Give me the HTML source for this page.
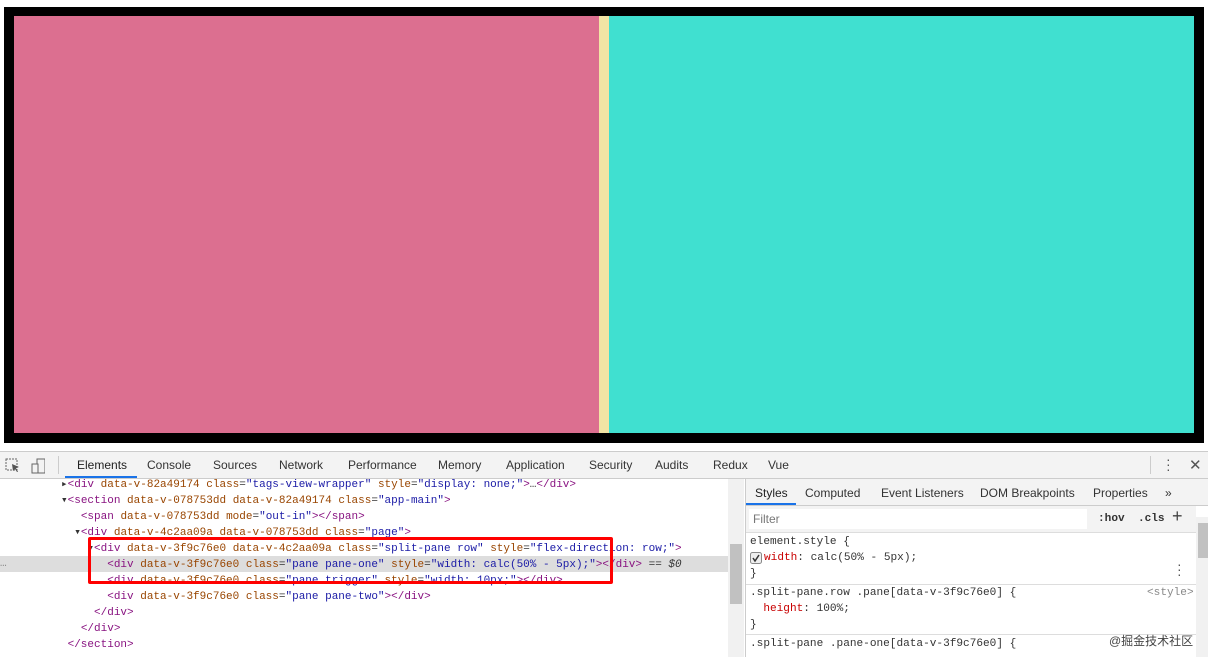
<!DOCTYPE html>
<html><head><meta charset="utf-8"><style>
*{margin:0;padding:0;box-sizing:border-box}
body{width:1208px;height:657px;overflow:hidden;background:#fff;position:relative;font-family:"Liberation Sans",sans-serif}
.a{position:absolute;white-space:pre}
.m{font-family:"Liberation Mono",monospace;font-size:11.1px;line-height:16px}
.c{font-family:"Liberation Mono",monospace;font-size:11px;line-height:16px}
.t{font-size:12px;color:#333;top:458px}
.tg{color:#881280}.at{color:#994500}.v{color:#1a1aa6}.k{color:#c80000}
.s{font-size:12px;color:#333;top:486px}
</style></head><body>
<div class="a" style="left:4px;top:7px;width:1200px;height:436px;background:#000"></div>
<div class="a" style="left:14px;top:16px;width:585px;height:417px;background:#dc6f90"></div>
<div class="a" style="left:599px;top:16px;width:10px;height:417px;background:#f2e4a4"></div>
<div class="a" style="left:609px;top:16px;width:585px;height:417px;background:#40e0d0"></div>
<div class="a" style="left:0;top:451px;width:1208px;height:28px;background:#f3f3f3;border-top:1px solid #ccc;border-bottom:1px solid #ccc"></div>
<svg class="a" style="left:5px;top:457px" width="40" height="18"><rect x="1" y="2" width="11" height="11" fill="none" stroke="#666" stroke-dasharray="2 1"/><path d="M7 7 L14 10 L11 11 L13 15 L12 15 L10 12 L8 14Z" fill="#555"/><rect x="32" y="2" width="8" height="14" fill="none" stroke="#666"/><rect x="27" y="7" width="6" height="9" fill="#f3f3f3" stroke="#666"/></svg>
<div class="a" style="left:58px;top:456px;width:1px;height:18px;background:#ccc"></div>
<div class="a t" style="left:77px;color:#222">Elements</div>
<div class="a" style="left:65px;top:476px;width:72px;height:2px;background:#1a73e8"></div>
<div class="a t" style="left:147px">Console</div>
<div class="a t" style="left:213px">Sources</div>
<div class="a t" style="left:279px">Network</div>
<div class="a t" style="left:348px">Performance</div>
<div class="a t" style="left:438px">Memory</div>
<div class="a t" style="left:506px">Application</div>
<div class="a t" style="left:589px">Security</div>
<div class="a t" style="left:655px">Audits</div>
<div class="a t" style="left:713px">Redux</div>
<div class="a t" style="left:768px">Vue</div>
<div class="a" style="left:1150px;top:456px;width:1px;height:18px;background:#ccc"></div>
<div class="a" style="left:1166px;top:457px;font-size:14px;color:#555;line-height:5px">·<br>·<br>·</div>
<div class="a" style="left:1189px;top:456px;font-size:15px;color:#555">✕</div>
<!-- code -->
<div class="a" style="left:0;top:556px;width:728px;height:16px;background:#ddd"></div>
<div class="a m" style="left:0;top:556px;color:#888">…</div>
<div class="a c" style="left:61px;top:477px;color:#333">▸<span class="tg">&lt;div</span> <span class="at">data-v-82a49174</span> <span class="at">class</span>=<span class="v">"tags-view-wrapper"</span> <span class="at">style</span>=<span class="v">"display: none;"</span><span class="tg">&gt;</span>…<span class="tg">&lt;/div&gt;</span>
▾<span class="tg">&lt;section</span> <span class="at">data-v-078753dd</span> <span class="at">data-v-82a49174</span> <span class="at">class</span>=<span class="v">"app-main"</span><span class="tg">&gt;</span>
   <span class="tg">&lt;span</span> <span class="at">data-v-078753dd</span> <span class="at">mode</span>=<span class="v">"out-in"</span><span class="tg">&gt;&lt;/span&gt;</span>
  ▾<span class="tg">&lt;div</span> <span class="at">data-v-4c2aa09a</span> <span class="at">data-v-078753dd</span> <span class="at">class</span>=<span class="v">"page"</span><span class="tg">&gt;</span>
    ▾<span class="tg">&lt;div</span> <span class="at">data-v-3f9c76e0</span> <span class="at">data-v-4c2aa09a</span> <span class="at">class</span>=<span class="v">"split-pane row"</span> <span class="at">style</span>=<span class="v">"flex-direction: row;"</span><span class="tg">&gt;</span>
       <span class="tg">&lt;div</span> <span class="at">data-v-3f9c76e0</span> <span class="at">class</span>=<span class="v">"pane pane-one"</span> <span class="at">style</span>=<span class="v">"width: calc(50% - 5px);"</span><span class="tg">&gt;&lt;/div&gt;</span> == <i>$0</i>
       <span class="tg">&lt;div</span> <span class="at">data-v-3f9c76e0</span> <span class="at">class</span>=<span class="v">"pane trigger"</span> <span class="at">style</span>=<span class="v">"width: 10px;"</span><span class="tg">&gt;&lt;/div&gt;</span>
       <span class="tg">&lt;div</span> <span class="at">data-v-3f9c76e0</span> <span class="at">class</span>=<span class="v">"pane pane-two"</span><span class="tg">&gt;&lt;/div&gt;</span>
     <span class="tg">&lt;/div&gt;</span>
   <span class="tg">&lt;/div&gt;</span>
 <span class="tg">&lt;/section&gt;</span></div>
<div class="a" style="left:88px;top:537px;width:525px;height:47px;border:3px solid #f00;border-radius:2px"></div>
<div class="a" style="left:728px;top:479px;width:16px;height:178px;background:#f1f1f1"></div>
<div class="a" style="left:730px;top:544px;width:12px;height:60px;background:#c1c1c1"></div>
<!-- right panel -->
<div class="a" style="left:745px;top:479px;width:1px;height:178px;background:#ccc"></div>
<div class="a" style="left:746px;top:479px;width:462px;height:27px;background:#f3f3f3;border-bottom:1px solid #ccc"></div>
<div class="a s" style="left:755px;color:#222">Styles</div>
<div class="a" style="left:746px;top:503px;width:50px;height:2px;background:#1a73e8"></div>
<div class="a s" style="left:805px">Computed</div>
<div class="a s" style="left:881px">Event Listeners</div>
<div class="a s" style="left:980px">DOM Breakpoints</div>
<div class="a s" style="left:1093px">Properties</div>
<div class="a s" style="left:1165px">»</div>
<div class="a" style="left:746px;top:506px;width:450px;height:27px;background:#f3f3f3;border-bottom:1px solid #ddd"></div>
<div class="a" style="left:749px;top:509px;width:338px;height:20px;background:#fff"></div>
<div class="a" style="left:753px;top:512px;font-size:12px;color:#777">Filter</div>
<div class="a m" style="left:1098px;top:511px;color:#333;font-weight:bold">:hov  .cls</div>
<div class="a" style="left:1172px;top:506px;font-size:18px;color:#444">+</div>
<div class="a m" style="left:750px;top:534px;color:#333">element.style {
<span style="display:inline-block;width:14px"></span><span class="k">width</span>: calc(50% - 5px);
}</div>
<svg class="a" style="left:750px;top:552px" width="12" height="12"><rect x=".5" y=".5" width="11" height="11" rx="2" fill="#eee" stroke="#888"/><path d="M3 6 L5 9 L9 3" stroke="#333" stroke-width="1.5" fill="none"/></svg>
<div class="a" style="left:1177px;top:562px;font-size:14px;color:#555;line-height:5px">·<br>·<br>·</div>
<div class="a" style="left:746px;top:584px;width:450px;height:1px;background:#ddd"></div>
<div class="a m" style="left:750px;top:585px;color:#333">.split-pane.row .pane[data-v-3f9c76e0] {
  <span class="k">height</span>: 100%;
}</div>
<div class="a m" style="left:1147px;top:585px;color:#888">&lt;style&gt;</div>
<div class="a" style="left:746px;top:634px;width:450px;height:1px;background:#ddd"></div>
<div class="a m" style="left:750px;top:636px;color:#333">.split-pane .pane-one[data-v-3f9c76e0] {</div>
<div class="a" style="left:1109px;top:632px;font-size:12px;color:#444;font-family:'Liberation Sans','Noto Sans CJK SC',sans-serif">@掘金技术社区</div>
<div class="a" style="left:1196px;top:517px;width:12px;height:140px;background:#f1f1f1"></div>
<div class="a" style="left:1198px;top:523px;width:10px;height:35px;background:#c1c1c1"></div>
</body></html>
